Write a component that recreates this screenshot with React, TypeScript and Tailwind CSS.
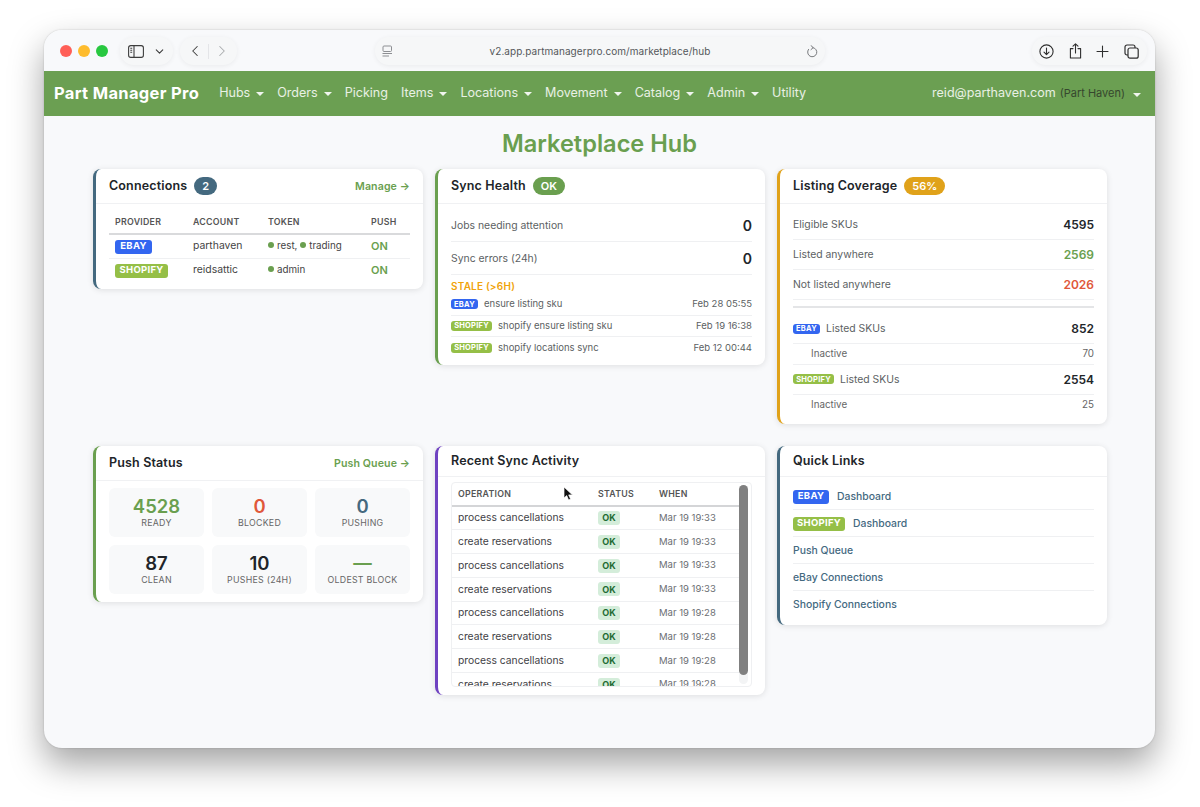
import React from "react";
import { ChevronDown, ChevronLeft, ChevronRight } from "lucide-react";

const head = "font-['Inter',sans-serif] font-semibold text-[12.5px] tracking-[0.012em] text-[#212529]";

function Caret() {
  return <span className="ml-[6px] inline-block w-0 h-0 border-x-[4px] border-x-transparent border-t-[4px] border-t-white/90 align-middle" />;
}

function NavItem({ label, caret = true }: { label: string; caret?: boolean }) {
  return (
    <span className="flex items-center text-[12.55px] text-white/85">
      {label}
      {caret && <Caret />}
    </span>
  );
}

function Badge({ kind, size = "md" }: { kind: "EBAY" | "SHOPIFY"; size?: "sm" | "md" | "lg" }) {
  const bg = kind === "EBAY" ? "bg-[#3366f0]" : "bg-[#95bf47]";
  const sz =
    size === "sm"
      ? kind === "EBAY"
        ? "w-[27px] h-[10px] text-[7.5px]"
        : "w-[41px] h-[10px] text-[7.5px]"
      : size === "md"
        ? kind === "EBAY"
          ? "w-[37px] h-[14px] text-[9.5px]"
          : "w-[53px] h-[14px] text-[9.5px]"
        : kind === "EBAY"
          ? "w-[36px] h-[14px] text-[9.5px]"
          : "w-[52px] h-[14px] text-[9.5px]";
  return (
    <span className={`${bg} ${sz} inline-flex items-center justify-center rounded-[3px] font-bold tracking-[0.03em] text-white shrink-0`}>
      {kind}
    </span>
  );
}

function Card({
  border,
  title,
  badge,
  badgeBg,
  link,
  headH,
  children,
}: {
  border: string;
  title: string;
  badge?: string;
  badgeBg?: string;
  link?: string;
  headH: string;
  children: React.ReactNode;
}) {
  return (
    <div className={`self-start bg-white rounded-[8px] border-l-[3px] ${border} shadow-[0_1px_6px_rgba(0,0,0,0.11)]`}>
      <div className={`${headH} flex items-center justify-between pl-[13px] pr-[13px] border-b border-[#f0f1f3]`}>
        <div className="flex items-center">
          <span className={head}>{title}</span>
          {badge && (
            <span className={`${badgeBg} ml-[7px] h-[18px] px-[8px] rounded-full text-[11px] font-semibold text-white flex items-center justify-center`}>
              {badge}
            </span>
          )}
        </div>
        {link && <span className="pt-[2px] text-[10.6px] font-semibold tracking-[0.01em] text-[#6a9f4f]">{link} →</span>}
      </div>
      {children}
    </div>
  );
}

function Dot() {
  return <span className="inline-block w-[6px] h-[6px] rounded-full bg-[#6a9f4f] mr-[3px] align-[1px]" />;
}

function Tile({ value, label, color }: { value: string; label: string; color: string }) {
  return (
    <div className="h-[49px] pb-[2px] rounded-[6px] bg-[#f8f9fa] flex flex-col items-center justify-center">
      <div className={`text-[18.5px] leading-[22px] font-semibold ${color}`}>{value}</div>
      <div className="text-[8.8px] leading-[12px] tracking-[0.03em] text-[#666]">{label}</div>
    </div>
  );
}

function StatRow({ label, value, color, h, last }: { label: React.ReactNode; value: string; color: string; h: string; last?: boolean }) {
  return (
    <div className={`${h} flex items-center justify-between ${last ? "" : "border-b border-[#eff0f2]"}`}>
      <span className="flex items-center text-[10.4px] text-[#5c5f63]">{label}</span>
      <span className={`text-[12px] font-semibold ${color}`}>{value}</span>
    </div>
  );
}

function SubRow({ value, h, last }: { value: string; h: string; last?: boolean }) {
  return (
    <div className={`${h} flex items-center justify-between pl-[18px] text-[9.8px] text-[#666] ${last ? "" : "border-b border-[#eff0f2]"}`}>
      <span>Inactive</span>
      <span>{value}</span>
    </div>
  );
}

const activity: [string, string][] = [
  ["process cancellations", "Mar 19 19:33"],
  ["create reservations", "Mar 19 19:33"],
  ["process cancellations", "Mar 19 19:33"],
  ["create reservations", "Mar 19 19:33"],
  ["process cancellations", "Mar 19 19:28"],
  ["create reservations", "Mar 19 19:28"],
  ["process cancellations", "Mar 19 19:28"],
  ["create reservations", "Mar 19 19:28"],
];

function StaleRow({ kind, text, when, last }: { kind: "EBAY" | "SHOPIFY"; text: string; when: string; last?: boolean }) {
  return (
    <div className={`h-[21.5px] flex items-center justify-between text-[9.5px] text-[#5c5f63] ${last ? "" : "border-b border-[#eff0f2]"}`}>
      <span className="flex items-center gap-[6px]">
        <Badge kind={kind} size="sm" />
        {text}
      </span>
      <span>{when}</span>
    </div>
  );
}

function LinkRow({ children, last }: { children: React.ReactNode; last?: boolean }) {
  return (
    <div className={`h-[27px] pt-[1px] flex items-center gap-[8px] text-[10.4px] font-medium text-[#44697f] ${last ? "" : "border-b border-[#eff0f2]"}`}>
      {children}
    </div>
  );
}

const pill = "h-[28px] rounded-full bg-[#f6f7f8] shadow-[0_1px_5px_rgba(0,0,0,0.06)] flex items-center";

export default function App() {
  return (
    <div className="w-[1200px] h-[807px] bg-white pt-[30px] pl-[44px] font-['Inter',sans-serif] overflow-hidden">
      <div className="relative w-[1111px] h-[718px] rounded-[18px] bg-[#f8f9fb] overflow-hidden flex flex-col shadow-[0_16px_34px_rgba(0,0,0,0.36),0_0_2px_rgba(0,0,0,0.2)]">
        {/* Safari toolbar */}
        <div className="h-[41px] shrink-0 flex items-center pl-[16px] pr-[8px] pt-[1px] bg-[#f8f9fb]">
          <span className="w-[12px] h-[12px] rounded-full bg-[#ff5f57]" />
          <span className="w-[12px] h-[12px] rounded-full bg-[#febc2e] ml-[6px]" />
          <span className="w-[12px] h-[12px] rounded-full bg-[#28c840] ml-[6px]" />
          <div className={`${pill} ml-[12px] w-[53px] pl-[8px] gap-[9px] text-[#3d3d3d]`}>
            <svg width="16" height="13" viewBox="0 0 16 13" fill="none" stroke="currentColor" strokeWidth="1.1">
              <rect x="0.6" y="0.6" width="14.8" height="11.8" rx="2.2" />
              <path d="M6 0.6V12.4" />
              <path d="M2.3 3.2H4.2M2.3 5.2H4.2M2.3 7.2H4.2" />
            </svg>
            <ChevronDown size={13} strokeWidth={2} />
          </div>
          <div className={`${pill} ml-[7px] w-[57px] pl-[6px] text-[#3d3d3d]`}>
            <ChevronLeft size={18} strokeWidth={1.4} />
            <span className="ml-[4px] w-px h-[15px] bg-[#e4e5e8]" />
            <ChevronRight size={18} strokeWidth={1.4} className="ml-[4px] text-[#a9abae]" />
          </div>
          <div className={`${pill} ml-[138px] w-[450px] justify-between px-[7px] text-[#666]`}>
            <svg width="11" height="12" viewBox="0 0 11 12" fill="none" stroke="#8d8f93" strokeWidth="1">
              <rect x="1" y="1" width="8.5" height="5.5" rx="1" />
              <path d="M0.5 8.5H10M0.5 11H7" />
            </svg>
            <span className="ml-[1px] text-[10px] text-[#55575b] tracking-[0.005em]">v2.app.partmanagerpro.com/marketplace/hub</span>
            <svg width="12" height="13" viewBox="0 0 12 13" fill="none" stroke="#77797c" strokeWidth="1" strokeLinecap="round" strokeLinejoin="round">
              <path d="M7 2.6A4.6 4.6 0 1 1 2.5 4.4" />
              <path d="M5 0.6L7.2 2.6L5 4.6" />
            </svg>
          </div>
          <div className={`${pill} ml-[207px] w-[115px] justify-between pl-[7px] pr-[8px] text-[#2f2f2f]`}>
            <svg width="15" height="15" viewBox="0 0 15 15" fill="none" stroke="currentColor" strokeWidth="1.1" strokeLinecap="round" strokeLinejoin="round">
              <circle cx="7.5" cy="7.5" r="6.6" />
              <path d="M7.5 4V10.6M5 8.2L7.5 10.7L10 8.2" />
            </svg>
            <svg width="13" height="16" viewBox="0 0 13 16" fill="none" stroke="currentColor" strokeWidth="1.1" strokeLinecap="round" strokeLinejoin="round">
              <path d="M4 5.6H1.4V15H11.6V5.6H9" />
              <path d="M6.5 10V1M4 3.2L6.5 0.8L9 3.2" />
            </svg>
            <svg width="13" height="13" viewBox="0 0 13 13" fill="none" stroke="currentColor" strokeWidth="1.1" strokeLinecap="round">
              <path d="M6.5 1V12M1 6.5H12" />
            </svg>
            <svg width="15" height="15" viewBox="0 0 15 15" fill="none" stroke="currentColor" strokeWidth="1.2">
              <rect x="4" y="4" width="10.2" height="10.2" rx="2" />
              <path d="M4 11H3A2 2 0 0 1 1 9V3A2 2 0 0 1 3 1H9A2 2 0 0 1 11 3V4" />
            </svg>
          </div>
        </div>

        {/* App navbar */}
        <div className="h-[45px] shrink-0 bg-[#6b9f52] flex items-center justify-between pl-[10px] pr-[14px]">
          <div className="flex items-center">
            <span className="text-[16.5px] font-bold tracking-[0.02em] text-white whitespace-nowrap">Part Manager Pro</span>
            <div className="ml-[20px] flex items-center gap-[13px]">
              <NavItem label="Hubs" />
              <NavItem label="Orders" />
              <NavItem label="Picking" caret={false} />
              <NavItem label="Items" />
              <NavItem label="Locations" />
              <NavItem label="Movement" />
              <NavItem label="Catalog" />
              <NavItem label="Admin" />
              <NavItem label="Utility" caret={false} />
            </div>
          </div>
          <div className="flex items-center">
            <span className="text-[12.55px] text-white/85">reid@parthaven.com</span>
            <span className="ml-[4px] text-[11px] text-[#36472e]">(Part Haven)</span>
            <span className="ml-[2px]"><Caret /></span>
          </div>
        </div>

        {/* Page */}
        <div className="pt-[14px] px-[49px]">
          <h1 className="text-center text-[23.6px] leading-[27px] font-semibold text-[#6a9f4f]">Marketplace Hub</h1>
          <div className="mt-[12px] grid grid-cols-[330px_330px_330px] gap-x-[12px] gap-y-[22px] items-start">
            {/* Connections */}
            <Card border="border-[#44697f]" title="Connections" badge="2" badgeBg="bg-[#44697f]" link="Manage" headH="h-[35px]">
              <div className="px-[13px] pt-[8px] pb-[7px]">
                <table className="w-full table-fixed text-[10.4px] text-[#444]">
                  <thead>
                    <tr className="h-[22px] border-b-2 border-[#d9dadc] text-[8.8px] font-semibold tracking-[0.03em] text-[#555] text-left">
                      <th className="w-[84px] pl-[6px] pb-[2px] font-semibold">PROVIDER</th>
                      <th className="w-[75px] pb-[2px] font-semibold">ACCOUNT</th>
                      <th className="w-[103px] pb-[2px] font-semibold">TOKEN</th>
                      <th className="pb-[2px] font-semibold">PUSH</th>
                    </tr>
                  </thead>
                  <tbody>
                    <tr className="h-[24px] border-b border-[#eff0f2]">
                      <td className="pl-[6px]"><Badge kind="EBAY" /></td>
                      <td>parthaven</td>
                      <td className="text-[9.8px]"><Dot />rest, <Dot />trading</td>
                      <td className="text-[11px] font-semibold text-[#6a9f4f]">ON</td>
                    </tr>
                    <tr className="h-[24px]">
                      <td className="pl-[6px]"><Badge kind="SHOPIFY" /></td>
                      <td>reidsattic</td>
                      <td className="text-[9.8px]"><Dot />admin</td>
                      <td className="text-[11px] font-semibold text-[#6a9f4f]">ON</td>
                    </tr>
                  </tbody>
                </table>
              </div>
            </Card>

            {/* Sync Health */}
            <Card border="border-[#6a9f4f]" title="Sync Health" badge="OK" badgeBg="bg-[#6a9f4f]" headH="h-[35px]">
              <div className="px-[13px] pt-[6px] pb-[6px]">
                <div className="h-[32px] flex items-center justify-between border-b border-[#eff0f2]">
                  <span className="pt-[1px] text-[10.4px] text-[#5c5f63]">Jobs needing attention</span>
                  <span className="text-[14px] font-semibold text-[#212529]">0</span>
                </div>
                <div className="h-[33px] flex items-center justify-between border-b border-[#eff0f2]">
                  <span className="pt-[1px] text-[10.4px] text-[#5c5f63]">Sync errors (24h)</span>
                  <span className="text-[14px] font-semibold text-[#212529]">0</span>
                </div>
                <div className="mt-[5px] text-[10px] leading-[12px] font-semibold tracking-[0.02em] text-[#f0a30a]">STALE (&gt;6H)</div>
                <div className="mt-[2px]">
                  <StaleRow kind="EBAY" text="ensure listing sku" when="Feb 28 05:55" />
                  <StaleRow kind="SHOPIFY" text="shopify ensure listing sku" when="Feb 19 16:38" />
                  <StaleRow kind="SHOPIFY" text="shopify locations sync" when="Feb 12 00:44" last />
                </div>
              </div>
            </Card>

            {/* Listing Coverage */}
            <Card border="border-[#e0a21a]" title="Listing Coverage" badge="56%" badgeBg="bg-[#e0a21a]" headH="h-[35px]">
              <div className="px-[13px] pt-[6px] pb-[8px]">
                <StatRow label="Eligible SKUs" value="4595" color="text-[#212529]" h="h-[30px]" />
                <StatRow label="Listed anywhere" value="2569" color="text-[#6a9f4f]" h="h-[30px]" />
                <StatRow label="Not listed anywhere" value="2026" color="text-[#e0583a]" h="h-[30px]" />
                <div className="mt-[6px] h-[2px] bg-[#e4e5e7]" />
                <div className="mt-[7px]">
                  <StatRow
                    label={
                      <span className="flex items-center gap-[6px]">
                        <Badge kind="EBAY" size="sm" />
                        Listed SKUs
                      </span>
                    }
                    value="852"
                    color="text-[#212529]"
                    h="h-[29px]"
                  />
                  <SubRow value="70" h="h-[21px]" />
                  <StatRow
                    label={
                      <span className="flex items-center gap-[6px]">
                        <Badge kind="SHOPIFY" size="sm" />
                        Listed SKUs
                      </span>
                    }
                    value="2554"
                    color="text-[#212529]"
                    h="h-[30px]"
                  />
                  <SubRow value="25" h="h-[21px]" last />
                </div>
              </div>
            </Card>

            {/* Push Status */}
            <Card border="border-[#6a9f4f]" title="Push Status" link="Push Queue" headH="h-[35px]">
              <div className="px-[13px] pt-[7px] pb-[8px] grid grid-cols-3 gap-x-[8px] gap-y-[8px]">
                <Tile value="4528" label="READY" color="text-[#6a9f4f]" />
                <Tile value="0" label="BLOCKED" color="text-[#e0583a]" />
                <Tile value="0" label="PUSHING" color="text-[#44697f]" />
                <Tile value="87" label="CLEAN" color="text-[#212529]" />
                <Tile value="10" label="PUSHES (24H)" color="text-[#212529]" />
                <Tile value="—" label="OLDEST BLOCK" color="text-[#6a9f4f]" />
              </div>
            </Card>

            {/* Recent Sync Activity */}
            <Card border="border-[#6f42c1]" title="Recent Sync Activity" headH="h-[31px]">
              <div className="px-[13px] pt-[5px] pb-[8px]">
                <div className="relative h-[205px] border border-[#eff0f2] rounded-[4px] overflow-hidden">
                  <table className="w-[288px] table-fixed text-[10.3px] text-[#3f4246]">
                    <thead>
                      <tr className="h-[23px] border-b-2 border-[#d4d5d7] text-left text-[8.8px] tracking-[0.03em] text-[#555]">
                        <th className="w-[146px] pl-[6px] font-semibold">OPERATION</th>
                        <th className="w-[61px] font-semibold">STATUS</th>
                        <th className="font-semibold">WHEN</th>
                      </tr>
                    </thead>
                    <tbody>
                      {activity.map(([op, when], i) => (
                        <tr key={i} className="h-[23.8px] border-b border-[#eff0f2]">
                          <td className="pl-[6px]">{op}</td>
                          <td>
                            <span className="inline-flex items-center justify-center w-[22px] h-[14px] rounded-[3px] bg-[#d4edda] text-[9px] font-bold text-[#1e6b33]">OK</span>
                          </td>
                          <td className="text-[9.5px] text-[#6b6e72]">{when}</td>
                        </tr>
                      ))}
                    </tbody>
                  </table>
                  <div className="absolute right-[3px] top-[2px] bottom-[2px] w-[9px] rounded-full bg-[#f3f4f5]">
                    <div className="h-[190px] rounded-full bg-[#808080]" />
                  </div>
                </div>
              </div>
            </Card>

            {/* Quick Links */}
            <Card border="border-[#44697f]" title="Quick Links" headH="h-[31px]">
              <div className="px-[13px] pt-[6px] pb-[7px]">
                <LinkRow><Badge kind="EBAY" size="lg" />Dashboard</LinkRow>
                <LinkRow><Badge kind="SHOPIFY" size="lg" />Dashboard</LinkRow>
                <LinkRow>Push Queue</LinkRow>
                <LinkRow>eBay Connections</LinkRow>
                <LinkRow last>Shopify Connections</LinkRow>
              </div>
            </Card>
          </div>
        </div>

        {/* Mouse pointer */}
        <svg className="absolute left-[519px] top-[456px]" width="11" height="15" viewBox="0 0 11 15">
          <path d="M1 1V12L3.7 9.6L5.6 14L7.6 13.1L5.7 8.9H9.5Z" fill="#111" stroke="#fff" strokeWidth="0.7" />
        </svg>
      </div>
    </div>
  );
}
